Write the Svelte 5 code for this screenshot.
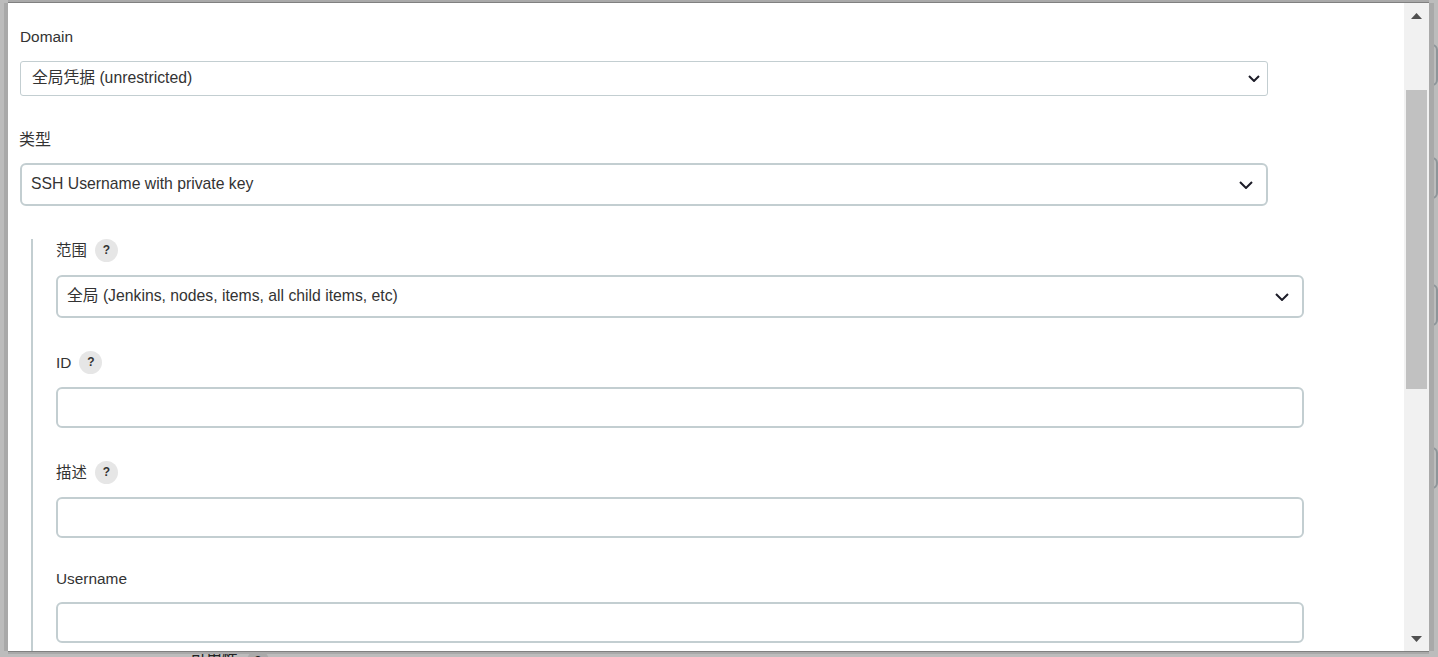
<script>
  const fields = [
    { label: '范围', help: true, kind: 'select', value: '全局 (Jenkins, nodes, items, all child items, etc)' },
    { label: 'ID', help: true, kind: 'input' },
    { label: '描述', help: true, kind: 'input' },
    { label: 'Username', help: false, kind: 'input' }
  ];
</script>

<div class="page">
  <div class="behind">
    <span class="ghost g1"></span>
    <span class="ghost g2"></span>
    <span class="ghost g3"></span>
    <span class="ghost g4"></span>
    <div class="behind-label">可用性 <span class="behind-help">?</span></div>
  </div>

  <div class="modal">
    <div class="content">
      <div class="label first-label">Domain</div>
      <div class="select-wrap plain">
        <select class="plain-select"><option>全局凭据 (unrestricted)</option></select>
        <svg class="chev small" viewBox="0 0 12 7"><path d="M1 1l5 5 5-5" /></svg>
      </div>

      <div class="label type-label">类型</div>
      <div class="select-wrap">
        <select><option>SSH Username with private key</option></select>
        <svg class="chev" viewBox="0 0 14 8"><path d="M1 1l6 6 6-6" /></svg>
      </div>

      <div class="nested">
        {#each fields as f}
          <div class="field">
            <div class="field-label" class:bare={!f.help}>
              <span>{f.label}</span>
              {#if f.help}<span class="help">?</span>{/if}
            </div>
            {#if f.kind === 'select'}
              <div class="select-wrap">
                <select><option>{f.value}</option></select>
                <svg class="chev" viewBox="0 0 14 8"><path d="M1 1l6 6 6-6" /></svg>
              </div>
            {:else}
              <input type="text" />
            {/if}
          </div>
        {/each}
      </div>
    </div>

    <div class="scrollbar">
      <svg class="arrow" viewBox="0 0 11 6"><path d="M5.5 0 11 6H0z" /></svg>
      <div class="track"><div class="thumb"></div></div>
      <svg class="arrow" viewBox="0 0 11 6"><path d="M0 0h11L5.500 6z" /></svg>
    </div>
  </div>
</div>

<style>
  :global(body) {
    margin: 0;
    overflow: hidden;
    font-family: "Liberation Sans", "Noto Sans CJK SC", sans-serif;
  }

  .page {
    position: relative;
    width: 1438px;
    height: 657px;
    overflow: hidden;
    background: #bcbcbc;
  }

  .behind { position: absolute; inset: 0; }

  .ghost {
    position: absolute;
    left: 1420px;
    width: 14px;
    height: 38px;
    border: 2px solid #8e9599;
    border-radius: 6px;
  }
  .g1 { top: 44px; }
  .g2 { top: 157px; }
  .g3 { top: 284px; }
  .g4 { top: 447px; }

  .behind-label {
    position: absolute;
    left: 190px;
    top: 650px;
    font-size: 16px;
    line-height: 18px;
    color: #222;
    display: flex;
    gap: 9px;
  }
  .behind-help {
    width: 22px;
    height: 22px;
    border-radius: 50%;
    background: #aaa;
    text-align: center;
    font-weight: 700;
    font-size: 12px;
    line-height: 22px;
  }

  .modal {
    position: absolute;
    left: 8px;
    top: 3px;
    width: 1421px;
    height: 648px;
    display: flex;
    background: #fff;
    box-shadow: 0 -1px 0 #808080, 0 1px 0 #808080, -4px 0 0 #a9a9a9, 5px 0 0 #a9a9a9, 0 -3px 0 #a9a9a9, 0 3px 0 #a9a9a9;
  }

  .content {
    flex: 1;
    min-width: 0;
    overflow: hidden;
    padding: 26px 0 0 12px;
    color: #333;
    font-size: 15.4px;
  }

  .label, .field-label {
    line-height: 16px;
    color: #333;
  }
  .first-label { margin-bottom: 16px; }
  .type-label { margin: 36px 0 15px -1px; font-size: 16px; }

  .select-wrap {
    position: relative;
    width: 1248px;
  }

  select {
    display: block;
    appearance: none;
    width: 100%;
    height: 43px;
    padding: 0 36px 2px 9px;
    border: 2px solid #c3ced1;
    border-radius: 6px;
    background: #fff;
    color: #333;
    font: 15.75px "Liberation Sans", "Noto Sans CJK SC", sans-serif;
    outline: none;
  }

  .plain-select {
    height: 35px;
    padding-left: 11px;
    border-width: 1px;
    border-radius: 3px;
  }

  .chev {
    position: absolute;
    right: 15px;
    top: 18px;
    width: 14px;
    height: 8px;
    pointer-events: none;
  }
  .chev.small {
    right: 8px;
    top: 14px;
    width: 12px;
    height: 7px;
  }
  .chev path {
    fill: none;
    stroke: #1c1c28;
    stroke-width: 2;
  }

  .nested {
    margin: 33px 0 0 11px;
    padding: 0 0 40px 23px;
    border-left: 2px solid #c3ced1;
  }

  .field { margin-bottom: 33px; }

  .field-label {
    display: flex;
    align-items: center;
    gap: 8px;
    height: 23px;
    margin-bottom: 13px;
  }

  .field-label.bare {
    box-sizing: border-box;
    height: 18px;
    padding-bottom: 2px;
  }

  .help {
    width: 23px;
    height: 23px;
    border-radius: 50%;
    background: #e6e6e6;
    color: #333;
    font-weight: 700;
    font-size: 12px;
    line-height: 23px;
    text-align: center;
  }

  input {
    display: block;
    box-sizing: border-box;
    width: 1248px;
    height: 41px;
    padding: 0 9px;
    border: 2px solid #c3ced1;
    border-radius: 6px;
    background: #fff;
    outline: none;
  }

  .scrollbar {
    flex: none;
    width: 25px;
    display: flex;
    flex-direction: column;
    align-items: center;
    background: #f1f1f1;
  }

  .arrow {
    flex: none;
    width: 11px;
    height: 6px;
    margin: 10px 0 9px;
    fill: #505050;
  }

  .track {
    flex: 1;
    width: 21px;
    padding-top: 62px;
  }

  .thumb {
    height: 299px;
    background: #c1c1c1;
  }
</style>
